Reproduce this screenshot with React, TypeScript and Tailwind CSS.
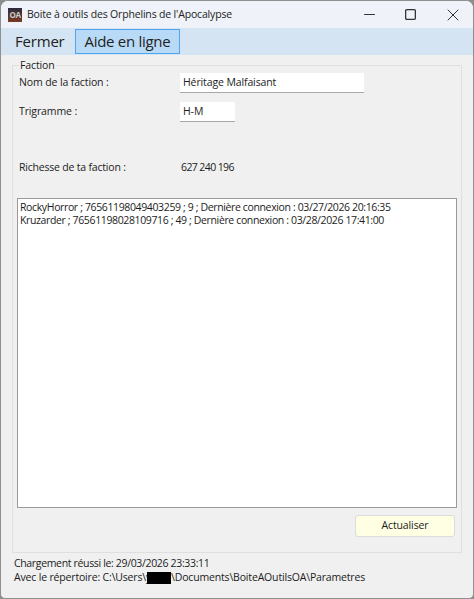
import { Minus, Square, X } from 'lucide-react';

const MEMBERS = [
  "RockyHorror ; 76561198049403259 ; 9 ; Dernière connexion : 03/27/2026 20:16:35",
  "Kruzarder ; 76561198028109716 ; 49 ; Dernière connexion : 03/28/2026 17:41:00",
];

function AppIcon() {
  return (
    <div className="w-[14px] h-[14px] bg-gradient-to-b from-[#2a2a3a] to-[#7a3a20] flex items-center justify-center overflow-hidden">
      <span className="text-[8px] leading-none font-bold text-[#c9c9c9] tracking-[-0.5px]">OA</span>
    </div>
  );
}

export default function App() {
  return (
    <div className="w-[474px] h-[599px] bg-[#8d8d8d] font-['Open_Sans','Noto_Sans',sans-serif] text-[#1c1c1c] overflow-hidden">
      <div className="w-full h-full flex flex-col rounded-t-lg rounded-b-[5px] border border-[#8f8f8f] bg-[#f0f0f0] overflow-hidden">
        {/* Title bar */}
        <div className="h-[27px] shrink-0 bg-[#eff3f9] flex items-center pl-[7px]">
          <AppIcon />
          <span className="ml-[5px] text-[10.5px] tracking-[-0.17px] text-[#222]">Boite à outils des Orphelins de l'Apocalypse</span>
          <div className="ml-auto flex items-center gap-[26px] pr-[10px] text-[#333]">
            <Minus size={17} strokeWidth={1.4} />
            <Square size={13} strokeWidth={2.4} />
            <X size={20} strokeWidth={1.2} />
          </div>
        </div>

        {/* Menu */}
        <div className="h-[27px] shrink-0 bg-[#d5e4f2] flex items-center pl-[5px] gap-[1px] text-[15px] tracking-[-0.2px] text-[#222]">
          <div className="h-[25px] px-[9px] flex items-center">Fermer</div>
          <div className="h-[25px] pl-[9px] pr-[9px] flex items-center border border-[#4fa6ee] bg-[#b9daf7] tracking-[-0.3px]">Aide en ligne</div>
        </div>

        {/* Body */}
        <div className="flex-1 flex flex-col px-[11px] text-[10.5px] tracking-[-0.12px]">
          <fieldset className="h-[495px] mt-[3px] border border-[#dfdfdf] px-[4px] flex flex-col min-h-0">
            <legend className="ml-[2px] px-[1px] leading-[14px]">Faction</legend>
            <div className="flex items-center h-[20px] mt-[1px] pl-[2px]">
              <span className="w-[161px]">Nom de la faction :</span>
              <div className="w-[184px] h-[20px] bg-white border-b border-[#a8a8a8] px-[3px] flex items-center">Héritage Malfaisant</div>
            </div>
            <div className="flex items-center h-[20px] mt-[9px] pl-[2px]">
              <span className="w-[161px]">Trigramme :</span>
              <div className="w-[55px] h-[20px] bg-white border-b border-[#a8a8a8] px-[3px] flex items-center">H-M</div>
            </div>
            <div className="flex items-center h-[16px] mt-[38px] pl-[2px]">
              <span className="w-[161px] tracking-[-0.2px]">Richesse de ta faction :</span>
              <span className="tracking-[-0.6px] pl-[1px]">627 240 196</span>
            </div>
            <div className="h-[310px] mt-[22px] bg-white border border-[#9a9a9a] pl-[2px] py-[2px] leading-[13px] tracking-[-0.37px]">
              {MEMBERS.map((m) => (
                <div key={m} className="whitespace-nowrap">{m}</div>
              ))}
            </div>
            <div className="flex justify-end mt-[7px] pr-[1px]">
              <button className="w-[100px] h-[22px] bg-[#ffffe3] border border-[#dcdcdc] rounded-[3px] text-[10.5px] -translate-x-[1px]">Actualiser</button>
            </div>
          </fieldset>
          <div className="mt-[3px] pl-[2px] leading-[14px]">
            <div className="tracking-[-0.34px]">Chargement réussi le: 29/03/2026 23:33:11</div>
            <div className="flex items-center whitespace-nowrap tracking-[-0.17px]">
              Avec le répertoire: C:\Users\y
              <span className="inline-block w-[24px] h-[12px] bg-black -ml-[4px] mt-[2px]" />
              \Documents\BoiteAOutilsOA\Parametres
            </div>
          </div>
        </div>
      </div>
    </div>
  );
}
